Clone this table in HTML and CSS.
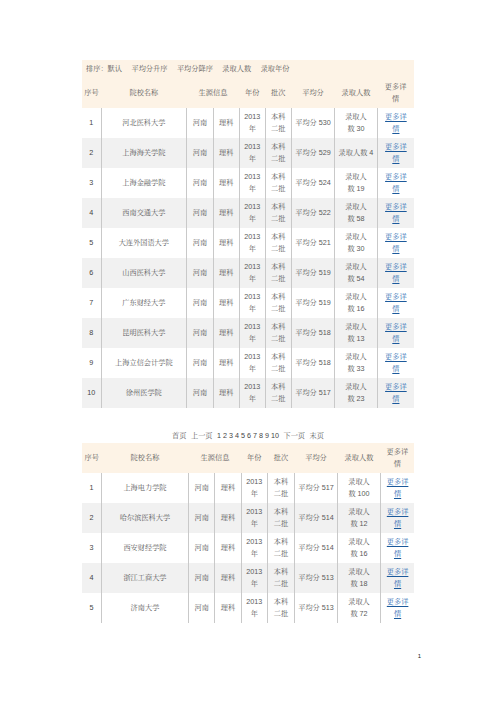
FILE: index.html
```html
<!DOCTYPE html>
<html lang="zh-CN">
<head>
<meta charset="utf-8">
<title>录取排序</title>
<link rel="stylesheet" href="styles.css">
</head>
<body>
<div class="page">
  <table class="grid t1">
    <colgroup><col><col><col><col><col><col><col><col><col></colgroup>
    <thead>
      <tr class="sort">
        <th colspan="9"><span>排序：默认</span><span>平均分升序</span><span>平均分降序</span><span>录取人数</span><span>录取年份</span></th>
      </tr>
      <tr class="head">
        <th>序号</th><th>院校名称</th><th colspan="2">生源信息</th><th>年份</th><th>批次</th><th>平均分</th><th>录取人数</th><th>更多详<br>情</th>
      </tr>
    </thead>
    <tbody>
      <tr><td>1</td><td>河北医科大学</td><td>河南</td><td>理科</td><td>2013<br>年</td><td>本科<br>二批</td><td>平均分 530</td><td>录取人<br>数 30</td><td><a href="#">更多详</a><br><a href="#">情</a></td></tr>
      <tr><td>2</td><td>上海海关学院</td><td>河南</td><td>理科</td><td>2013<br>年</td><td>本科<br>二批</td><td>平均分 529</td><td>录取人数 4</td><td><a href="#">更多详</a><br><a href="#">情</a></td></tr>
      <tr><td>3</td><td>上海金融学院</td><td>河南</td><td>理科</td><td>2013<br>年</td><td>本科<br>二批</td><td>平均分 524</td><td>录取人<br>数 19</td><td><a href="#">更多详</a><br><a href="#">情</a></td></tr>
      <tr><td>4</td><td>西南交通大学</td><td>河南</td><td>理科</td><td>2013<br>年</td><td>本科<br>二批</td><td>平均分 522</td><td>录取人<br>数 58</td><td><a href="#">更多详</a><br><a href="#">情</a></td></tr>
      <tr><td>5</td><td>大连外国语大学</td><td>河南</td><td>理科</td><td>2013<br>年</td><td>本科<br>二批</td><td>平均分 521</td><td>录取人<br>数 30</td><td><a href="#">更多详</a><br><a href="#">情</a></td></tr>
      <tr><td>6</td><td>山西医科大学</td><td>河南</td><td>理科</td><td>2013<br>年</td><td>本科<br>二批</td><td>平均分 519</td><td>录取人<br>数 54</td><td><a href="#">更多详</a><br><a href="#">情</a></td></tr>
      <tr><td>7</td><td>广东财经大学</td><td>河南</td><td>理科</td><td>2013<br>年</td><td>本科<br>二批</td><td>平均分 519</td><td>录取人<br>数 16</td><td><a href="#">更多详</a><br><a href="#">情</a></td></tr>
      <tr><td>8</td><td>昆明医科大学</td><td>河南</td><td>理科</td><td>2013<br>年</td><td>本科<br>二批</td><td>平均分 518</td><td>录取人<br>数 13</td><td><a href="#">更多详</a><br><a href="#">情</a></td></tr>
      <tr><td>9</td><td>上海立信会计学院</td><td>河南</td><td>理科</td><td>2013<br>年</td><td>本科<br>二批</td><td>平均分 518</td><td>录取人<br>数 33</td><td><a href="#">更多详</a><br><a href="#">情</a></td></tr>
      <tr><td>10</td><td>徐州医学院</td><td>河南</td><td>理科</td><td>2013<br>年</td><td>本科<br>二批</td><td>平均分 517</td><td>录取人<br>数 23</td><td><a href="#">更多详</a><br><a href="#">情</a></td></tr>
    </tbody>
  </table>

  <div class="pager">
    <span>首页</span><span>上一页</span><span class="nums">1 2 3 4 5 6 7 8 9 10</span><span>下一页</span><span>末页</span>
  </div>

  <table class="grid t2">
    <colgroup><col><col><col><col><col><col><col><col><col></colgroup>
    <thead>
      <tr class="head">
        <th>序号</th><th>院校名称</th><th colspan="2">生源信息</th><th>年份</th><th>批次</th><th>平均分</th><th>录取人数</th><th>更多详<br>情</th>
      </tr>
    </thead>
    <tbody>
      <tr><td>1</td><td>上海电力学院</td><td>河南</td><td>理科</td><td>2013<br>年</td><td>本科<br>二批</td><td>平均分 517</td><td>录取人<br>数 100</td><td><a href="#">更多详</a><br><a href="#">情</a></td></tr>
      <tr><td>2</td><td>哈尔滨医科大学</td><td>河南</td><td>理科</td><td>2013<br>年</td><td>本科<br>二批</td><td>平均分 514</td><td>录取人<br>数 12</td><td><a href="#">更多详</a><br><a href="#">情</a></td></tr>
      <tr><td>3</td><td>西安财经学院</td><td>河南</td><td>理科</td><td>2013<br>年</td><td>本科<br>二批</td><td>平均分 514</td><td>录取人<br>数 16</td><td><a href="#">更多详</a><br><a href="#">情</a></td></tr>
      <tr><td>4</td><td>浙江工商大学</td><td>河南</td><td>理科</td><td>2013<br>年</td><td>本科<br>二批</td><td>平均分 513</td><td>录取人<br>数 18</td><td><a href="#">更多详</a><br><a href="#">情</a></td></tr>
      <tr><td>5</td><td>济南大学</td><td>河南</td><td>理科</td><td>2013<br>年</td><td>本科<br>二批</td><td>平均分 513</td><td>录取人<br>数 72</td><td><a href="#">更多详</a><br><a href="#">情</a></td></tr>
    </tbody>
  </table>

  <div class="folio">1</div>
</div>
</body>
</html>
```

FILE: styles.css
```css
html, body {
  margin: 0;
  padding: 0;
  background: #ffffff;
}

body {
  font-family: "Liberation Sans", "Noto Serif CJK SC", "Noto Sans CJK SC", sans-serif;
  font-size: 7.2px;
  line-height: 12px;
  color: #5a5a5a;
}

.page {
  width: 332px;
  padding: 60px 0 0 82px;
}

.grid {
  width: 332px;
  border-collapse: collapse;
  table-layout: fixed;
}

.grid th,
.grid td {
  padding: 3px 0;
  text-align: center;
  vertical-align: middle;
  white-space: nowrap;
  font-weight: normal;
}

.grid thead tr {
  background: #fdf3e6;
}

.grid .sort th {
  text-align: left;
  padding: 3px 0 3px 4px;
  height: 11px;
}

.grid .sort span {
  margin-right: 9.5px;
}

.grid td {
  border-right: 1px solid #c9c9c9;
}

.grid td:last-child {
  border-right: none;
}

.grid tbody tr:nth-child(even) {
  background: #f1f1f1;
}

.grid td:first-child {
  color: #444;
}

.grid a {
  color: #2b6db3;
  text-decoration: underline;
  text-decoration-color: #1c5a9c;
  text-decoration-thickness: 1px;
  text-underline-offset: 1.5px;
}

.t1 col:nth-child(1) { width: 19px; }
.t1 col:nth-child(2) { width: 85.7px; }
.t1 col:nth-child(3) { width: 26.6px; }
.t1 col:nth-child(4) { width: 26px; }
.t1 col:nth-child(5) { width: 26px; }
.t1 col:nth-child(6) { width: 26px; }
.t1 col:nth-child(7) { width: 43.4px; }
.t1 col:nth-child(8) { width: 42.6px; }
.t1 col:nth-child(9) { width: 36.7px; }

.t2 col:nth-child(1) { width: 19.3px; }
.t2 col:nth-child(2) { width: 87.4px; }
.t2 col:nth-child(3) { width: 26px; }
.t2 col:nth-child(4) { width: 26.6px; }
.t2 col:nth-child(5) { width: 26px; }
.t2 col:nth-child(6) { width: 27.4px; }
.t2 col:nth-child(7) { width: 42.6px; }
.t2 col:nth-child(8) { width: 43.4px; }
.t2 col:nth-child(9) { width: 33.3px; }

.pager {
  display: flex;
  justify-content: center;
  gap: 4.5px;
  margin: 22px 0 1px;
  line-height: 12px;
  white-space: nowrap;
}

.pager .nums {
  color: #444;
}

.folio {
  margin-top: 29px;
  width: 339px;
  text-align: right;
  font-size: 6px;
  line-height: 8px;
  color: #222;
}
```
